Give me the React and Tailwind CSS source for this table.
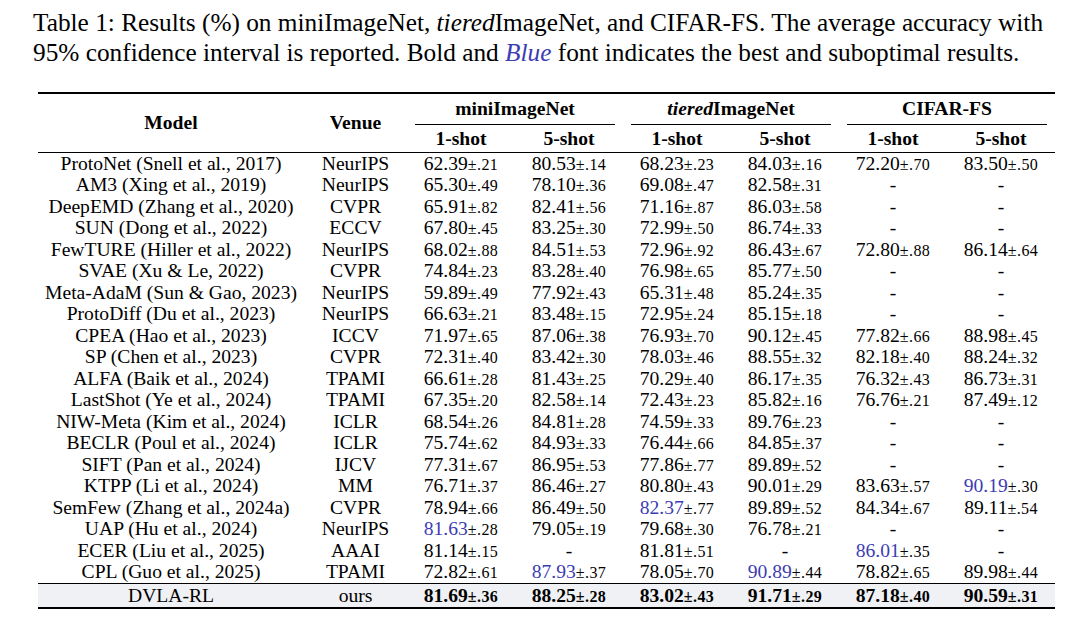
const rows = [
  ["ProtoNet (Snell et al., 2017)", "NeurIPS", "62.39|.21", "80.53|.14", "68.23|.23", "84.03|.16", "72.20|.70", "83.50|.50"],
  ["AM3 (Xing et al., 2019)", "NeurIPS", "65.30|.49", "78.10|.36", "69.08|.47", "82.58|.31", "-", "-"],
  ["DeepEMD (Zhang et al., 2020)", "CVPR", "65.91|.82", "82.41|.56", "71.16|.87", "86.03|.58", "-", "-"],
  ["SUN (Dong et al., 2022)", "ECCV", "67.80|.45", "83.25|.30", "72.99|.50", "86.74|.33", "-", "-"],
  ["FewTURE (Hiller et al., 2022)", "NeurIPS", "68.02|.88", "84.51|.53", "72.96|.92", "86.43|.67", "72.80|.88", "86.14|.64"],
  ["SVAE (Xu & Le, 2022)", "CVPR", "74.84|.23", "83.28|.40", "76.98|.65", "85.77|.50", "-", "-"],
  ["Meta-AdaM (Sun & Gao, 2023)", "NeurIPS", "59.89|.49", "77.92|.43", "65.31|.48", "85.24|.35", "-", "-"],
  ["ProtoDiff (Du et al., 2023)", "NeurIPS", "66.63|.21", "83.48|.15", "72.95|.24", "85.15|.18", "-", "-"],
  ["CPEA (Hao et al., 2023)", "ICCV", "71.97|.65", "87.06|.38", "76.93|.70", "90.12|.45", "77.82|.66", "88.98|.45"],
  ["SP (Chen et al., 2023)", "CVPR", "72.31|.40", "83.42|.30", "78.03|.46", "88.55|.32", "82.18|.40", "88.24|.32"],
  ["ALFA (Baik et al., 2024)", "TPAMI", "66.61|.28", "81.43|.25", "70.29|.40", "86.17|.35", "76.32|.43", "86.73|.31"],
  ["LastShot (Ye et al., 2024)", "TPAMI", "67.35|.20", "82.58|.14", "72.43|.23", "85.82|.16", "76.76|.21", "87.49|.12"],
  ["NIW-Meta (Kim et al., 2024)", "ICLR", "68.54|.26", "84.81|.28", "74.59|.33", "89.76|.23", "-", "-"],
  ["BECLR (Poul et al., 2024)", "ICLR", "75.74|.62", "84.93|.33", "76.44|.66", "84.85|.37", "-", "-"],
  ["SIFT (Pan et al., 2024)", "IJCV", "77.31|.67", "86.95|.53", "77.86|.77", "89.89|.52", "-", "-"],
  ["KTPP (Li et al., 2024)", "MM", "76.71|.37", "86.46|.27", "80.80|.43", "90.01|.29", "83.63|.57", "*90.19|.30"],
  ["SemFew (Zhang et al., 2024a)", "CVPR", "78.94|.66", "86.49|.50", "*82.37|.77", "89.89|.52", "84.34|.67", "89.11|.54"],
  ["UAP (Hu et al., 2024)", "NeurIPS", "*81.63|.28", "79.05|.19", "79.68|.30", "76.78|.21", "-", "-"],
  ["ECER (Liu et al., 2025)", "AAAI", "81.14|.15", "-", "81.81|.51", "-", "*86.01|.35", "-"],
  ["CPL (Guo et al., 2025)", "TPAMI", "72.82|.61", "*87.93|.37", "78.05|.70", "*90.89|.44", "78.82|.65", "89.98|.44"],
];

const ours = ["81.69|.36", "88.25|.28", "83.02|.43", "91.71|.29", "87.18|.40", "90.59|.31"];

const Score = ({ value }) => {
  if (value === "-") return <span>-</span>;
  const blue = value.startsWith("*");
  const [main, pm] = value.replace("*", "").split("|");
  return (
    <span className="whitespace-nowrap">
      <span className={blue ? "text-[#3c3cb4]" : ""}>{main}</span>
      <span className="text-[16px] tracking-[0.4px]">±{pm}</span>
    </span>
  );
};

const Group = ({ title }) => (
  <div className="w-[216px] flex flex-col">
    <div className="h-[30px] flex items-center justify-center">{title}</div>
    <div className="mx-[8px] h-px bg-black" />
    <div className="h-[27px] flex">
      <div className="w-[108px] flex items-center justify-center">1-shot</div>
      <div className="w-[108px] flex items-center justify-center">5-shot</div>
    </div>
  </div>
);

export default function App() {
  return (
    <div className="w-[1080px] h-[627px] bg-white text-black [font-family:Liberation_Serif,Times_New_Roman,serif] overflow-hidden">
      {/* Caption */}
      <p className="pl-[33px] pt-[7px] text-[25.3px] leading-[30px] whitespace-nowrap">
        Table 1: Results (%) on miniImageNet, <i>tiered</i>ImageNet, and CIFAR-FS. The average accuracy with
        <br />
        95% confidence interval is reported. Bold and <i className="text-[#3c3cb4]">Blue</i> font indicates the best and suboptimal results.
      </p>

      {/* Table */}
      <div className="ml-[38px] mt-[25px] w-[1017px] text-[19.6px]">
        <div className="h-[2px] bg-black" />

        {/* Header */}
        <div className="flex font-bold h-[58px]">
          <div className="w-[266px] flex items-center justify-center">Model</div>
          <div className="w-[103px] flex items-center justify-center">Venue</div>
          <Group title="miniImageNet" />
          <Group title={<span><i>tiered</i>ImageNet</span>} />
          <Group title="CIFAR-FS" />
        </div>
        <div className="h-px bg-black" />

        {/* Body */}
        {rows.map((r, i) => (
          <div key={i} className="flex h-[21.5px] items-center leading-none">
            <div className="w-[266px] text-center whitespace-nowrap">{r[0]}</div>
            <div className="w-[103px] text-center">{r[1]}</div>
            {r.slice(2).map((v, j) => (
              <div key={j} className="w-[108px] text-center">
                <Score value={v} />
              </div>
            ))}
          </div>
        ))}

        <div className="h-px bg-black" />
        <div className="flex h-[23px] items-center leading-none bg-[#f0f1f4]">
          <div className="w-[266px] text-center">DVLA-RL</div>
          <div className="w-[103px] text-center">ours</div>
          {ours.map((v, j) => (
            <div key={j} className="w-[108px] text-center font-bold">
              <Score value={v} />
            </div>
          ))}
        </div>
        <div className="h-[2px] bg-black" />
      </div>
    </div>
  );
}
